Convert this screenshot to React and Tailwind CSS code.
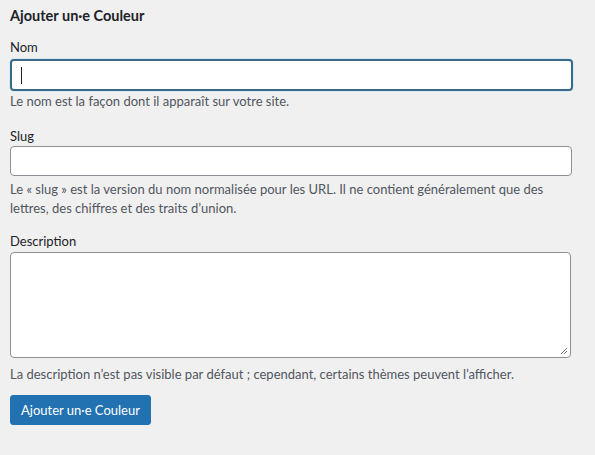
import React from "react";

export default function App() {
  const font = { fontFamily: '"Segoe UI", Lato, "Noto Sans", sans-serif' };
  return (
    <div className="w-[595px] h-[455px] bg-[#f0f0f1] text-[#1d2327] px-[10px] pt-[6px]" style={font}>
      <h2 className="text-[14.5px] font-bold leading-[20px] m-0">Ajouter un·e Couleur</h2>
      <div className="mt-[12px]">
        <label className="block text-[13px] leading-[18px]">Nom</label>
        <div className="mt-[3px] h-[32px] w-[563px] rounded-[4px] border-2 border-[#3a6a88] bg-white shadow-[0_0_0_1px_#d6eaf6] flex items-center pl-[9px]">
          <span className="block w-[1px] h-[17px] bg-[#1d2327]"></span>
        </div>
        <p className="mt-[0px] text-[13px] leading-[20px] text-[#50575e]">Le nom est la façon dont il apparaît sur votre site.</p>
      </div>
      <div className="mt-[16px]">
        <label className="block text-[13px] leading-[18px]">Slug</label>
        <div className="mt-[1px] h-[30px] w-[562px] rounded-[4px] border border-[#8c8f94] bg-white"></div>
        <p className="mt-[4px] text-[13px] leading-[19px] text-[#50575e] w-[540px]">
          Le « slug » est la version du nom normalisée pour les URL. Il ne contient généralement que des lettres, des chiffres et des traits d’union.
        </p>
      </div>
      <div className="mt-[14px]">
        <label className="block text-[13px] leading-[18px]">Description</label>
        <div className="relative mt-[2px] h-[106px] w-[561px] rounded-[4px] border border-[#8c8f94] bg-white">
          <svg className="absolute right-[2px] bottom-[2px]" width="8" height="8" viewBox="0 0 8 8">
            <path d="M7 1 L1 7 M7 4 L4 7" stroke="#7a7a7a" strokeWidth="1" />
          </svg>
        </div>
        <p className="mt-[7px] text-[13px] leading-[19px] text-[#50575e]">La description n’est pas visible par défaut ; cependant, certains thèmes peuvent l’afficher.</p>
      </div>
      <button className="mt-[11px] h-[30px] px-[10px] rounded-[3px] bg-[#2271b1] text-white text-[13px] leading-[28px] border border-[#2271b1]">Ajouter un·e Couleur</button>
    </div>
  );
}
